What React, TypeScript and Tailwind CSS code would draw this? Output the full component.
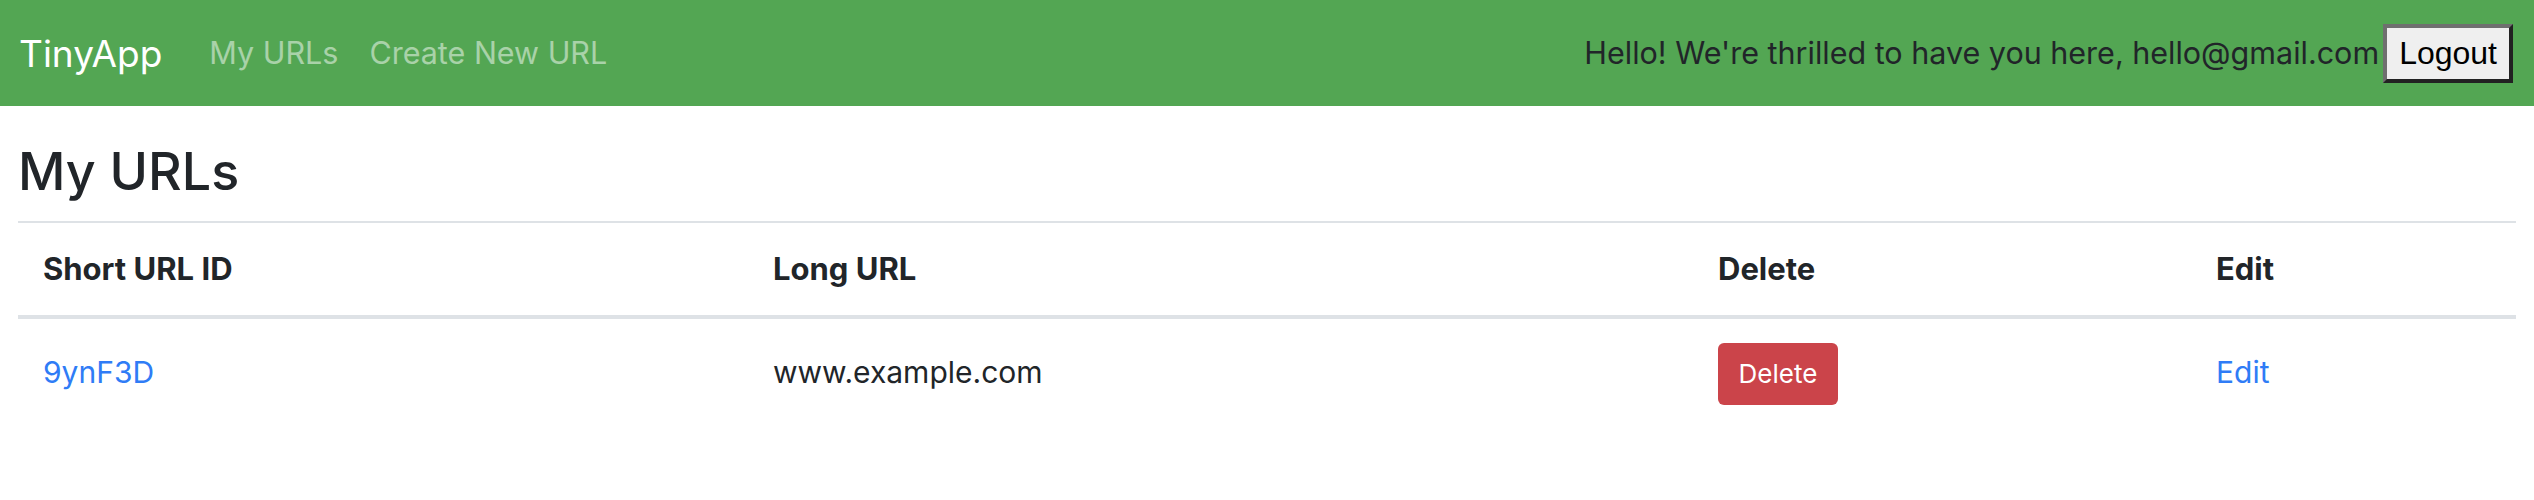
import React from 'react';

const urls = [{ id: '9ynF3D', longURL: 'www.example.com' }];

function Navbar() {
  return (
    <nav className="h-[106px] bg-[#53a653] flex items-center pl-[19px] pr-[21px]">
      <a href="#" className="text-white text-[37px] leading-none">TinyApp</a>
      <div className="flex items-center gap-[31px] ml-[47px]">
        <a href="#" className="text-white/50 text-[30.5px] leading-none">My URLs</a>
        <a href="#" className="text-white/50 text-[30.5px] leading-none">Create New URL</a>
      </div>
      <div className="ml-auto flex items-center gap-[4px]">
        <span className="text-[#212529] text-[30.5px] leading-none">
          Hello! We're thrilled to have you here, hello@gmail.com
        </span>
        <button className="h-[59px] px-3 bg-[#efefef] border-4 border-t-[#6f6f6f] border-l-[#6f6f6f] border-r-[#222] border-b-[#222] text-black text-[32px] leading-none font-['Liberation_Sans',Arial,sans-serif]">
          Logout
        </button>
      </div>
    </nav>
  );
}

export default function App() {
  return (
    <div className="min-h-[500px] bg-white font-['Inter',sans-serif] text-[#212529]">
      <Navbar />
      <main className="px-[18px]">
        <h2 className="mt-[35px] text-[52px] leading-[1.2] font-medium">My URLs</h2>
        <hr className="mt-[18px] border-0 h-[2px] bg-[#dee2e6]" />
        <div className="grid grid-cols-[730px_945px_498px_1fr] h-[96px] items-center border-b-4 border-[#dee2e6] text-[31px] font-bold">
          <div className="pl-[25px]">Short URL ID</div>
          <div className="pl-[25px]">Long URL</div>
          <div className="pl-[25px]">Delete</div>
          <div className="pl-[25px]">Edit</div>
        </div>
        {urls.map((u) => (
          <div key={u.id} className="grid grid-cols-[730px_945px_498px_1fr] items-start text-[30px]">
            <div className="pl-[25px] pt-[31px]">
              <a href="#" className="text-[#2f7cf6]">{u.id}</a>
            </div>
            <div className="pl-[25px] pt-[31px]">{u.longURL}</div>
            <div className="pl-[25px] pt-[24px]">
              <button className="w-[120px] h-[62px] rounded-[6px] bg-[#cb444a] text-white text-[26px] leading-none">
                Delete
              </button>
            </div>
            <div className="pl-[25px] pt-[31px]">
              <a href="#" className="text-[#2f7cf6]">Edit</a>
            </div>
          </div>
        ))}
      </main>
    </div>
  );
}
